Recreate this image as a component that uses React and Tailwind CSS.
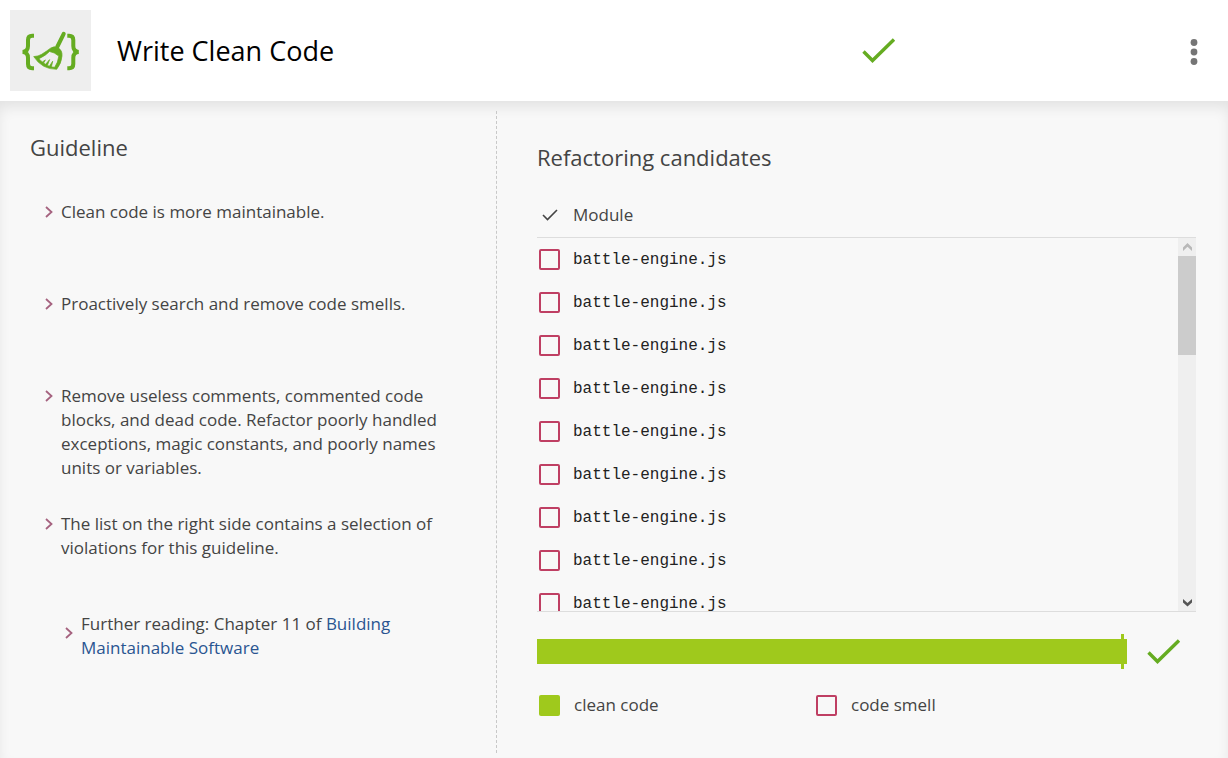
const modules = Array.from({ length: 9 }, (_, i) => ({ id: i, name: "battle-engine.js" }));

function CleanCodeLogo() {
  return (
    <svg viewBox="0 0 81 81" className="size-[81px] shrink-0 bg-[#eeeeee]" fill="none" stroke="#65ac21" aria-hidden="true">
      <path strokeWidth="4" d="M24 25.8h-1.8q-4.2 0-4.2 4.2v6q0 5.6-5.4 5.900 5.400.3 5.400 5.900v6.200q0 4.200 4.200 4.200H24" />
      <path strokeWidth="4" d="M57.3 25.8h1.8q4.2 0 4.2 4.2v6q0 5.600 5.400 5.900-5.400.3-5.400 5.900v6.200q0 4.200-4.200 4.200h-1.800" />
      <path strokeWidth="4" strokeLinecap="round" d="M53.7 23.8 47.200 37" />
      <path
        fill="#65ac21"
        strokeWidth="0.7"
        fillRule="evenodd"
        d="M40.5 38.2q4-2.6 7.3-.6 4.8 2.8 4.2 8.4-.6 7.6-5.300 13.300-14.600.2-23-12.700 4.600-.2 8-2.300 5.300-3.400 8.800-6.100ZM39.500 41.500q-3.300 3.700-10.500 7.200 1.700 2.200 3.400 3.200l3-2-1.800 3.200 2 1.200 4-4.700-2.200 5.800 2 .8 3.300-5-1.300 5.700 3.300.4q3.300-4.700 4.100-11.200-4.300-3.900-9.300-4.600Z"
      />
    </svg>
  );
}

function BigCheck({ label }) {
  return (
    <svg viewBox="0 0 34 26" className="h-[26px] w-[34px] shrink-0" fill="none" stroke="#65ac21" strokeWidth="3.4" role="img" aria-label={label}>
      <path d="M1.500 13.500 10.500 22.500 32 1.500" />
    </svg>
  );
}

function Chevron() {
  return (
    <svg viewBox="0 0 8 12" className="mt-[6px] h-3 w-2 shrink-0" fill="none" stroke="#a5627f" strokeWidth="1.8" aria-hidden="true">
      <path d="M1 1l5.500 5L1 11" />
    </svg>
  );
}

function Guideline({ children }) {
  return (
    <li className="flex min-h-[60px] gap-2">
      <Chevron />
      <p>{children}</p>
    </li>
  );
}

function ScrollArrow({ up }) {
  return (
    <svg viewBox="0 0 18 18" className="size-[18px] shrink-0" aria-hidden="true">
      {up ? (
        <path fill="#b8b8b8" d="M9.500 5l4.500 4.500V13L9.500 8.800 5 13V9.500Z" />
      ) : (
        <path fill="#555555" d="M9.500 13.500 5 9.500V6l4.500 4L14 6v3.500Z" />
      )}
    </svg>
  );
}

const box = "block size-[21px] appearance-none rounded-[2px] border-2 border-[#bf3f63]";

export default function App() {
  return (
    <div className="flex min-h-screen flex-col bg-[#f8f8f8] font-['Open_Sans',sans-serif] text-[17px] leading-6 text-[#444444]">
      <header className="flex items-center bg-white py-[10px] pr-[14px] pl-[10px]">
        <CleanCodeLogo />
        <h1 className="ml-[26px] flex-1 text-[27px] leading-9 text-black">Write Clean Code</h1>
        <div className="w-[312px]">
          <BigCheck label="Guideline met" />
        </div>
        <button type="button" aria-label="More options" className="flex size-10 items-center justify-center">
          <svg viewBox="0 0 8 28" className="h-7 w-2" fill="#757575" aria-hidden="true">
            <circle cx="4" cy="5.500" r="3.400" />
            <circle cx="4" cy="15" r="3.400" />
            <circle cx="4" cy="24.500" r="3.400" />
          </svg>
        </button>
      </header>

      <main className="grid flex-1 grid-cols-[497px_1fr] pt-[10px] pb-[5px] shadow-[inset_0_8px_14px_-2px_rgba(0,0,0,0.09)]">
        <section className="border-r border-dashed border-[#c8c8c8] pt-5 pr-[30px] pl-[30px]">
          <h2 className="text-[22px] leading-8">Guideline</h2>
          <ul className="mt-[37px] flex flex-col gap-8 pl-[15px]">
            <Guideline>Clean code is more maintainable.</Guideline>
            <Guideline>Proactively search and remove code smells.</Guideline>
            <Guideline>
              Remove useless comments, commented code blocks, and dead code. Refactor poorly handled exceptions, magic
              constants, and poorly names units or variables.
            </Guideline>
            <Guideline>
              The list on the right side contains a selection of violations for this guideline.
            </Guideline>
            <li className="mt-2 flex gap-2 pl-5">
              <span className="flex items-center pb-3">
                <Chevron />
              </span>
              <p>
                Further reading: Chapter 11 of{" "}
                <a href="#building-maintainable-software" className="text-[#2a5591]">
                  Building Maintainable Software
                </a>
              </p>
            </li>
          </ul>
        </section>

        <section className="pt-[30px] pr-8 pl-10">
          <h2 className="text-[22px] leading-8">Refactoring candidates</h2>

          <div className="mt-5 flex h-[419px] border-b border-[#dddddd]">
            <table className="flex flex-1 flex-col">
              <thead className="block border-b border-[#dddddd]">
                <tr className="flex h-[44px] items-center text-left">
                  <th className="w-9 pl-[5px]">
                    <svg viewBox="0 0 16 12" className="h-3 w-4" fill="none" stroke="#444444" strokeWidth="1.600" role="img" aria-label="Done">
                      <path d="M1 6l4.500 4.500L15 1" />
                    </svg>
                  </th>
                  <th className="font-normal">Module</th>
                </tr>
              </thead>
              <tbody className="block min-h-0 flex-1 overflow-y-auto [scrollbar-width:none]">
                {modules.map((m) => (
                  <tr key={m.id} className="flex h-[43px] items-center">
                    <td className="w-9 pl-[2px]">
                      <input type="checkbox" id={`module-${m.id}`} className={box} />
                    </td>
                    <td className="font-['Liberation_Mono',monospace] text-[16px] text-[#222222]">
                      <label htmlFor={`module-${m.id}`}>{m.name}</label>
                    </td>
                  </tr>
                ))}
              </tbody>
            </table>
            <div className="flex w-[18px] flex-col" aria-hidden="true">
              <div className="h-[45px] border-b border-[#dddddd]" />
              <div className="flex flex-1 flex-col bg-[#efefef]">
                <ScrollArrow up />
                <div className="h-[99px] bg-[#cccccc]" />
                <div className="flex-1" />
                <ScrollArrow />
              </div>
            </div>
          </div>

          <div className="mt-[22px] flex items-center pr-[15px]">
            <div className="relative flex h-[35px] flex-1 items-center" role="img" aria-label="Share of clean code">
              <div className="h-[25px] w-full bg-[#9fc91c]" />
              <div className="absolute inset-y-0 right-[3px] w-[3px] bg-[#9fc91c]" />
            </div>
            <div className="ml-5">
              <BigCheck label="Target reached" />
            </div>
          </div>

          <ul className="mt-6 flex">
            <li className="flex w-[277px] items-center gap-[14px] pl-[2px]">
              <span className="size-[21px] rounded-[2px] bg-[#9fc91c]" />
              clean code
            </li>
            <li className="flex items-center gap-[14px] pl-[2px]">
              <span className={box} />
              code smell
            </li>
          </ul>
        </section>
      </main>
    </div>
  );
}
